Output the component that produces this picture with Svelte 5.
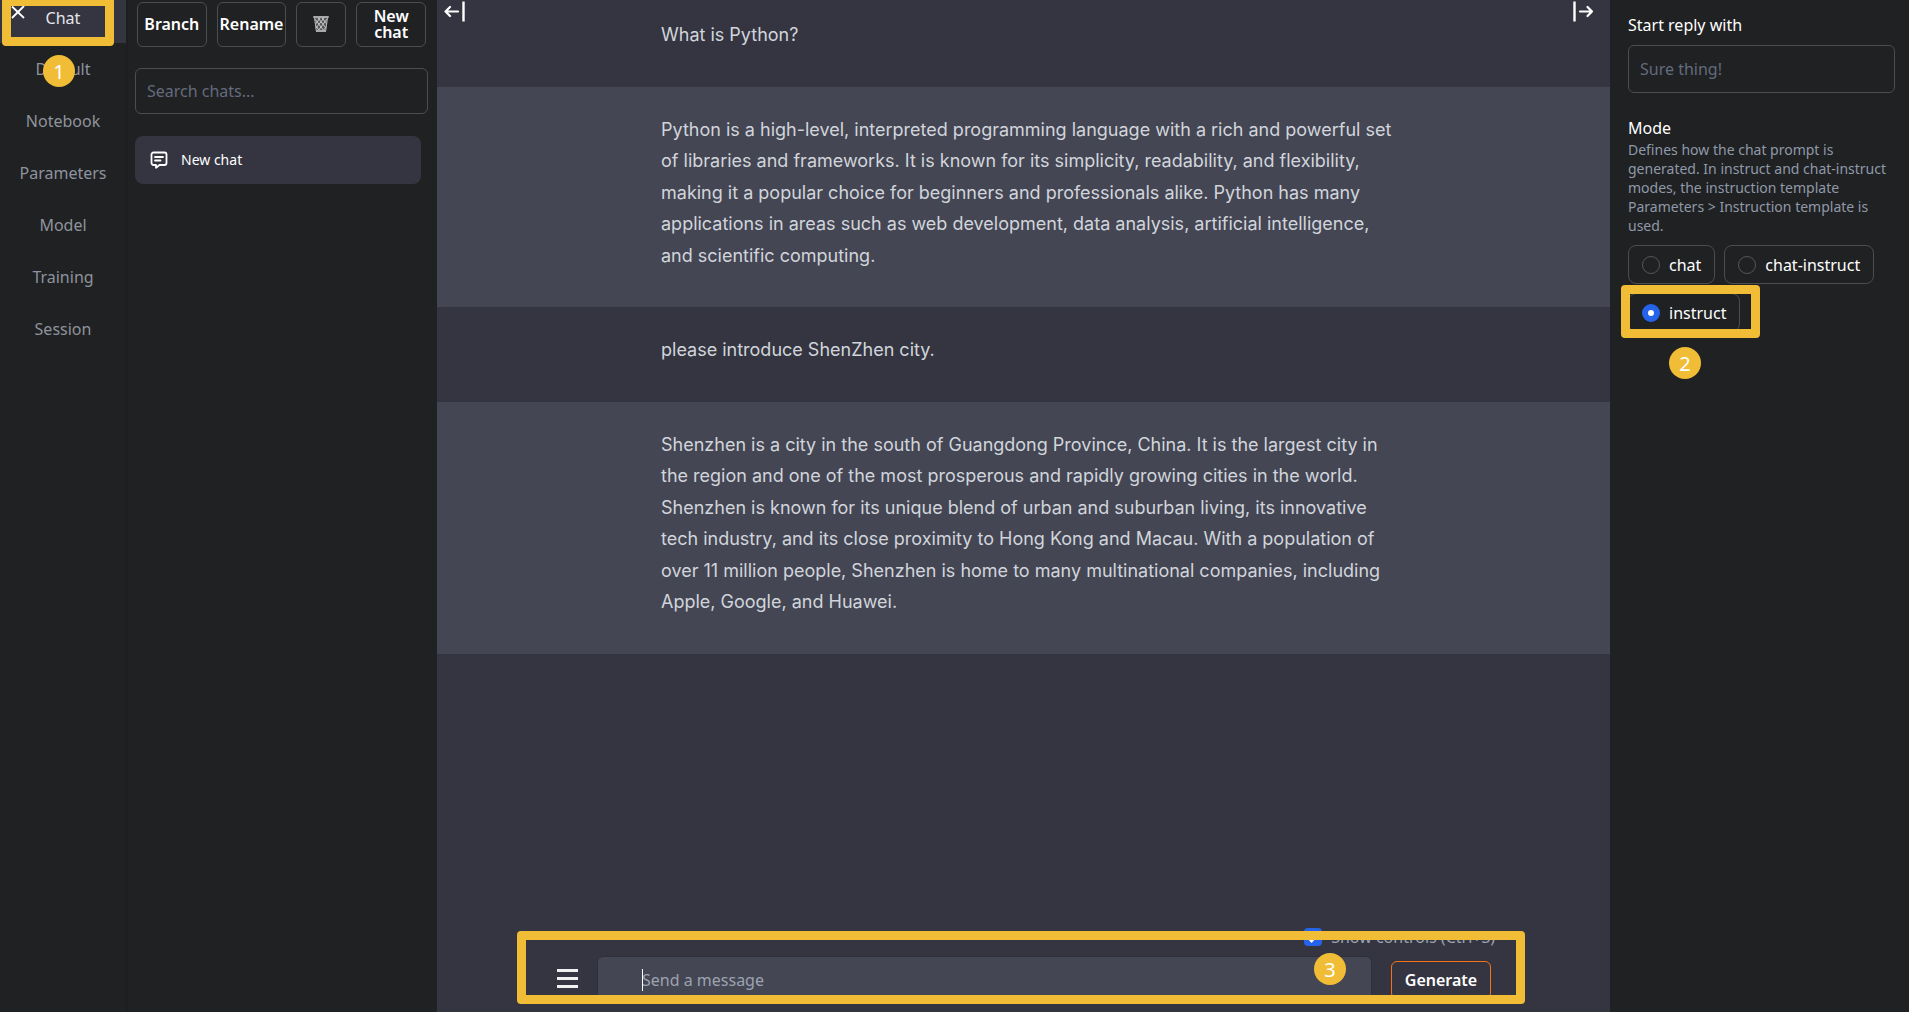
<script>
  const tabs = ['Chat', 'Default', 'Notebook', 'Parameters', 'Model', 'Training', 'Session'];
  const messages = [
    { role: 'user', text: 'What is Python?' },
    {
      role: 'bot',
      text: 'Python is a high-level, interpreted programming language with a rich and powerful set of libraries and frameworks. It is known for its simplicity, readability, and flexibility, making it a popular choice for beginners and professionals alike. Python has many applications in areas such as web development, data analysis, artificial intelligence, and scientific computing.'
    },
    { role: 'user', text: 'please introduce ShenZhen city.' },
    {
      role: 'bot',
      text: 'Shenzhen is a city in the south of Guangdong Province, China. It is the largest city in the region and one of the most prosperous and rapidly growing cities in the world. Shenzhen is known for its unique blend of urban and suburban living, its innovative tech industry, and its close proximity to Hong Kong and Macau. With a population of over 11 million people, Shenzhen is home to many multinational companies, including Apple, Google, and Huawei.'
    }
  ];
  const modes = ['chat', 'chat-instruct', 'instruct'];

  let active = $state('Chat');
  let mode = $state('instruct');
  let showControls = $state(true);
  let search = $state('');
  let reply = $state('');
  let draft = $state('');
</script>

<div class="app">
  <nav class="nav">
    {#each tabs as tab}
      <button class="tab" class:active={active === tab} onclick={() => (active = tab)}>{tab}</button>
    {/each}
    <button class="close" aria-label="Close menu">
      <svg width="14" height="14" viewBox="0 0 14 14"><path d="M1 1.500L13 13M13 1L1 13" stroke="#fff" stroke-width="1.8" fill="none" /></svg>
    </button>
    <div class="mark mark-tab"></div>
    <span class="step step-one">1</span>
  </nav>

  <aside class="chats">
    <div class="actions">
      <button class="btn">Branch</button>
      <button class="btn">Rename</button>
      <button class="btn trash" aria-label="Delete chat">
        <svg width="16" height="17" viewBox="0 0 16 17">
          <path d="M1.500 2.500L3.300 16h9.400l1.800-13.500z" fill="#55565a" />
          <path d="M2 4l9 12M5 3l8 10M9 3l5 6M14 4L5 16M11 3L3 13M7 3L2.500 9M6.500 16L3 11M13 12l-3 4" stroke="#c9c9c9" stroke-width="1" fill="none" />
          <path d="M1.500 2.500L3.300 16h9.400l1.800-13.500" stroke="#b5b5b5" stroke-width="1" fill="none" />
          <rect x="0" y="1" width="16" height="2" rx="1" fill="#a9a9a9" />
          <rect x="3" y="15" width="10" height="2" fill="#a9a9a9" />
        </svg>
      </button>
      <button class="btn">New chat</button>
    </div>
    <input class="field search" type="text" placeholder="Search chats..." aria-label="Search chats" bind:value={search} />
    <button class="chat-item">
      <svg width="18" height="18" viewBox="0 0 18 18" fill="none" stroke="#fff" stroke-width="1.800" stroke-linejoin="round" stroke-linecap="round">
        <path d="M3.500 1.500h11a2 2 0 0 1 2 2v8.500a2 2 0 0 1-2 2H9.500L6 16.800V14H3.500a2 2 0 0 1-2-2V3.500a2 2 0 0 1 2-2z" />
        <path d="M5 6h8M5 9.500h5.500" />
      </svg>
      <span>New chat</span>
    </button>
  </aside>

  <main class="main">
    <button class="toggle toggle-left" aria-label="Hide chat list">
      <svg width="22" height="22" viewBox="0 0 22 22" fill="none" stroke="#fff" stroke-linecap="round" stroke-linejoin="round">
        <path d="M14 11.500H1.500M6 7L1.500 11.500L6 16" stroke-width="2.200" />
        <path d="M19.500 1.500v20" stroke-width="2.400" stroke-linecap="butt" />
      </svg>
    </button>
    <button class="toggle toggle-right" aria-label="Hide controls">
      <svg width="22" height="22" viewBox="0 0 22 22" fill="none" stroke="#fff" stroke-linecap="round" stroke-linejoin="round">
        <path d="M8 11.500h12M15.500 7L20 11.500L15.500 16" stroke-width="2.200" />
        <path d="M2.500 1.500v20" stroke-width="2.400" stroke-linecap="butt" />
      </svg>
    </button>

    <div class="log">
      {#each messages as m}
        <section class="message {m.role}"><p>{m.text}</p></section>
      {/each}
    </div>

    <form class="composer" onsubmit={(e) => e.preventDefault()}>
      <label class="show-controls">
        <input type="checkbox" bind:checked={showControls} />
        <span>Show controls (Ctrl+S)</span>
      </label>
      <button class="menu" type="button" aria-label="Menu">
        <span></span><span></span><span></span>
      </button>
      <div class="prompt">
        <input type="text" placeholder="Send a message" aria-label="Send a message" bind:value={draft} />
        <span class="caret"></span>
      </div>
      <button class="generate" type="submit">Generate</button>
      <div class="mark mark-composer"></div>
      <span class="step step-three">3</span>
    </form>
  </main>

  <aside class="controls">
    <label class="title" for="reply">Start reply with</label>
    <input class="field reply" id="reply" type="text" placeholder="Sure thing!" bind:value={reply} />
    <fieldset>
      <legend class="title">Mode</legend>
      <p class="hint">Defines how the chat prompt is generated. In instruct and chat-instruct modes, the instruction template Parameters &gt; Instruction template is used.</p>
      <div class="modes">
        {#each modes as m}
          <div class="mode">
            <label class="option">
              <input type="radio" name="mode" value={m} bind:group={mode} />
              <span>{m}</span>
            </label>
            {#if m === 'instruct'}
              <div class="mark mark-mode"></div>
              <span class="step step-two">2</span>
            {/if}
          </div>
        {/each}
      </div>
    </fieldset>
  </aside>
</div>

<style>
  :global(body) {
    background: #343541;
  }
  .app {
    display: grid;
    grid-template-columns: 128px 309px minmax(0, 1fr) 299px;
    min-height: 100vh;
    font: 16px/24px 'Noto Sans', sans-serif;
    color: #fff;
  }
  .app :is(button, input, div, label, aside, nav) {
    box-sizing: border-box;
  }
  button,
  input {
    font: inherit;
    color: inherit;
    margin: 0;
  }
  button {
    background: none;
    border: 0;
    padding: 0;
    cursor: pointer;
  }
  svg {
    display: block;
  }

  .nav {
    position: relative;
    display: flex;
    flex-direction: column;
    background: #202123;
    border-right: 2px solid #1d1e20;
  }
  .tab {
    height: 52px;
    color: #8e939d;
  }
  .tab:first-child {
    height: 43px;
    padding-bottom: 7px;
  }
  .tab.active {
    background: #343541;
    color: #e6e6ea;
  }
  .close {
    position: absolute;
    left: 11px;
    top: 5px;
  }

  .mark {
    position: absolute;
    border: 9px solid #f1bd36;
    border-radius: 4px;
    pointer-events: none;
  }
  .step {
    position: absolute;
    width: 32px;
    height: 32px;
    border-radius: 50%;
    background: #f1bd36;
    color: #fff;
    font-size: 20px;
    line-height: 34px;
    text-align: center;
    pointer-events: none;
  }
  .mark-tab {
    left: 2px;
    top: -3px;
    width: 112px;
    height: 49px;
  }
  .step-one {
    left: 43px;
    top: 55px;
  }

  .chats {
    background: #202123;
    padding: 2px 9px 0 7px;
  }
  .actions {
    display: flex;
    gap: 10px;
    padding: 0 2px;
  }
  .btn {
    flex: 1 1 0;
    min-width: 0;
    height: 45px;
    display: flex;
    align-items: center;
    justify-content: center;
    padding-bottom: 2px;
    border: 1px solid #4c4d50;
    border-radius: 6px;
    font-weight: 600;
    line-height: 16px;
  }
  .btn.trash {
    flex: 0 0 50px;
  }
  .field {
    display: block;
    width: 100%;
    padding: 0 11px;
    border: 1px solid #4c4d50;
    border-radius: 6px;
    background: transparent;
    outline: none;
  }
  .field::placeholder {
    color: #636b7d;
    opacity: 1;
  }
  .search {
    height: 46px;
    margin-top: 21px;
  }
  .chat-item {
    display: flex;
    align-items: center;
    gap: 13px;
    width: calc(100% - 7px);
    height: 48px;
    margin-top: 22px;
    padding: 0 15px;
    border-radius: 8px;
    background: #343541;
    font-size: 14px;
  }

  .main {
    position: relative;
    display: flex;
    flex-direction: column;
    background: #343541;
  }
  .toggle {
    position: absolute;
    top: 0;
  }
  .toggle-left {
    left: 7px;
  }
  .toggle-right {
    right: 16px;
  }
  .log {
    flex: 1;
    font: 18px/1.75 Inter, sans-serif;
    color: #d1d5db;
  }
  .message {
    padding: 27px 24px 36px 34px;
  }
  .message:first-child {
    padding-top: 19px;
  }
  .message.bot {
    background: #444654;
  }
  .message p {
    max-width: 735px;
    margin: 0 auto;
  }

  .composer {
    position: relative;
    display: flex;
    align-items: center;
    margin: 0 85px 8px 80px;
    padding: 25px 34px 0 40px;
    box-sizing: border-box;
  }
  .show-controls {
    position: absolute;
    top: -6px;
    right: 30px;
    display: flex;
    align-items: center;
    gap: 9px;
    color: #9ca3af;
  }
  .show-controls input {
    appearance: none;
    display: grid;
    place-items: center;
    width: 18px;
    height: 18px;
    border-radius: 4px;
    background: #4b4c58;
  }
  .show-controls input:checked {
    background: #2563eb;
  }
  .show-controls input:checked::after {
    content: '';
    width: 8px;
    height: 4px;
    border: solid #fff;
    border-width: 0 0 2px 2px;
    transform: rotate(-45deg);
  }
  .menu {
    display: grid;
    gap: 5px;
    width: 21px;
    margin: 0 19px 3px 0;
  }
  .menu span {
    height: 3px;
    background: #f1f1f3;
  }
  .prompt {
    position: relative;
    flex: 1;
  }
  .prompt input {
    display: block;
    width: 100%;
    height: 48px;
    padding: 0 44px;
    border: 1px solid #2f303e;
    border-radius: 6px;
    background: #444654;
    outline: none;
  }
  .prompt input::placeholder {
    color: #9ca3af;
    opacity: 1;
  }
  .caret {
    position: absolute;
    left: 45px;
    top: 13px;
    width: 1px;
    height: 22px;
    background: #fff;
  }
  .generate {
    width: 100px;
    height: 38px;
    margin-left: 19px;
    border: 1px solid #f97316;
    border-radius: 6px;
    font-weight: 600;
  }
  .mark-composer {
    inset: 0;
  }
  .step-three {
    right: 179px;
    top: 22px;
  }

  .controls {
    background: #202123;
    padding: 13px 14px 0 18px;
  }
  .title {
    display: block;
    padding: 0;
    line-height: 24px;
  }
  .reply {
    height: 48px;
    margin-top: 8px;
  }
  fieldset {
    margin: 23px 0 0;
    padding: 0;
    border: 0;
    min-width: 0;
  }
  .hint {
    margin: 0;
    font-size: 14px;
    line-height: 19px;
    color: #8f99a8;
  }
  .modes {
    display: flex;
    flex-wrap: wrap;
    gap: 9px;
    margin-top: 10px;
  }
  .mode {
    position: relative;
  }
  .option {
    display: flex;
    align-items: center;
    gap: 9px;
    height: 39px;
    padding: 0 13px;
    border: 1px solid #4c4d50;
    border-radius: 8px;
  }
  .option input {
    appearance: none;
    width: 18px;
    height: 18px;
    border: 1px solid #55565a;
    border-radius: 50%;
  }
  .option input:checked {
    border: 6px solid #2563eb;
    background: #fff;
  }
  .mark-mode {
    left: -7px;
    right: -20px;
    top: -8px;
    bottom: -6px;
  }
  .step-two {
    left: 41px;
    top: 54px;
  }
</style>
